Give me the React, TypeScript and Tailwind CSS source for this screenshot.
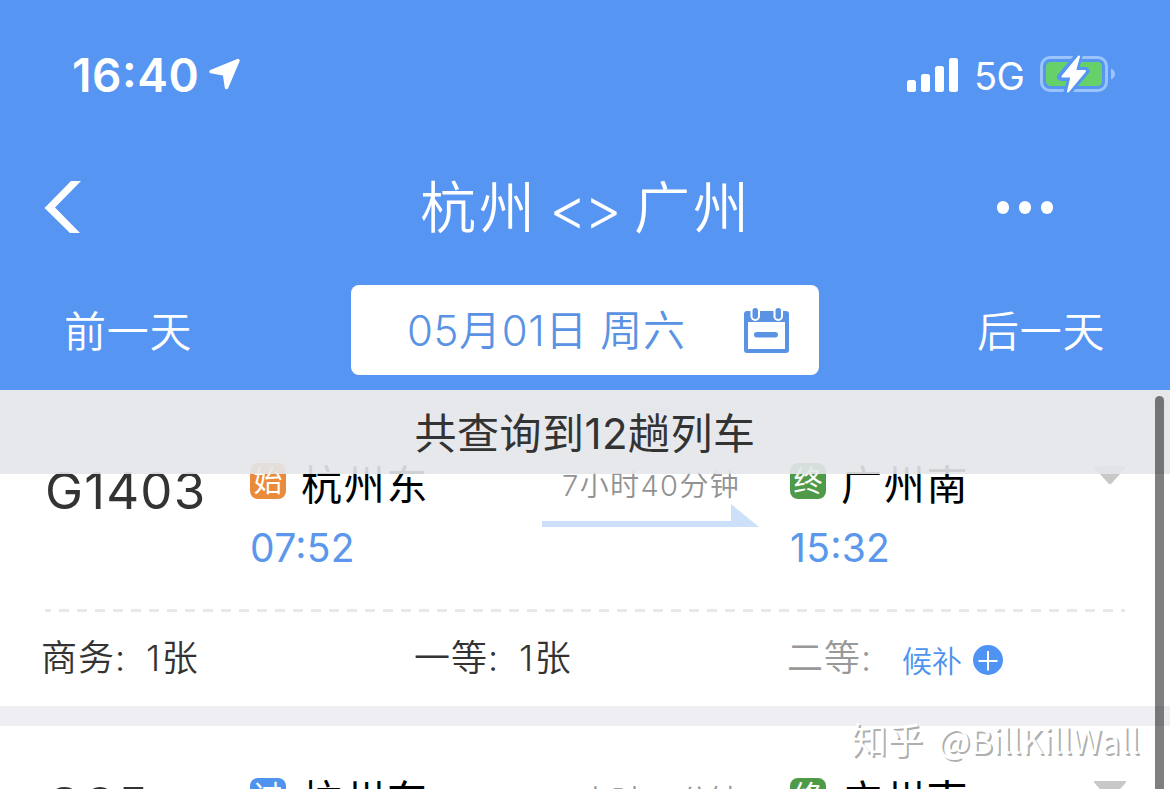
import { clsx } from "clsx";

type Stop = { badge: string; color: string; station: string; time: string };

type Train = {
  code: string;
  from: Stop;
  to: Stop;
  duration: string;
};

const trains: Train[] = [
  {
    code: "G1403",
    from: { badge: "始", color: "bg-[#e98b3a]", station: "杭州东", time: "07:52" },
    to: { badge: "终", color: "bg-[#4f9a48]", station: "广州南", time: "15:32" },
    duration: "7小时40分钟",
  },
  {
    code: "G85",
    from: { badge: "过", color: "bg-[#4f93ee]", station: "杭州东", time: "09:05" },
    to: { badge: "终", color: "bg-[#4f9a48]", station: "广州南", time: "15:50" },
    duration: "6小时45分钟",
  },
];

function StatusBar() {
  return (
    <div className="flex h-[149px] items-center pl-[72px] pr-[54px]">
      <span className="w-[136px] text-[46px] leading-[52px] font-[560] tracking-[0.6px] [font-feature-settings:'case']">
        16:40
      </span>
      <svg width="33" height="33" viewBox="0 0 33 33" fill="white" stroke="white" strokeWidth="3.5" strokeLinejoin="round">
        <path d="M30 2.5 L3 13.5 L16.5 16 L18.5 29.5 Z" />
      </svg>
      <div className="ml-auto flex items-center">
        <svg width="52" height="34" viewBox="0 0 52 34" fill="white">
          <rect x="0" y="22" width="9" height="12" rx="2.5" />
          <rect x="14" y="16" width="9" height="18" rx="2.5" />
          <rect x="28" y="8" width="9" height="26" rx="2.5" />
          <rect x="42" y="0" width="9" height="34" rx="2.5" />
        </svg>
        <span className="ml-[15px] w-[66px] pt-[2px] text-[38px] leading-[44px] tracking-[-0.5px]">5G</span>
        <svg className="-mt-[2px]" width="76" height="40" viewBox="0 0 76 40">
          <rect x="1.5" y="3.5" width="65" height="33" rx="8.5" fill="none" stroke="#9ac4fb" strokeWidth="3" />
          <path d="M71 14.5 Q75 16.5 75 20 Q75 23.5 71 25.5 Z" fill="#9ac4fb" />
          <rect x="6" y="8" width="56" height="24" rx="4.5" fill="#65d168" />
          <path
            d="M38.5 2 L21 23 H32 L27.5 38 L45.5 17 H34.5 Z"
            fill="white"
            stroke="#5695f2"
            strokeWidth="8"
            strokeLinejoin="round"
          />
          <path
            d="M39 2.5 L22.5 22.5 H31.5 L28 37.5 L45 17 H35 Z"
            fill="white"
            stroke="white"
            strokeWidth="2"
            strokeLinejoin="round"
          />
        </svg>
      </div>
    </div>
  );
}

function NavBar() {
  return (
    <div className="flex h-[116px] items-center pl-[44px]">
      <svg width="38" height="52" viewBox="0 0 38 52" fill="white">
        <path d="M27 0 H37 L11 26.5 L36 52 H26 L0.5 27 Z" />
      </svg>
      <h1 className="ml-[338px] flex w-[341px] items-center pt-[2px] text-[56px] leading-[64px] font-[350]">
        <span className="w-[129px] tracking-[3px]">杭州</span>
        <span className="w-[85px] pt-[2px] text-[58px] tracking-[-3px]">{"<>"}</span>
        <span className="tracking-[3px]">广州</span>
      </h1>
      <div className="ml-[236px] flex gap-[10px]">
        <span className="h-[13px] w-3 rounded-full bg-white" />
        <span className="h-[13px] w-3 rounded-full bg-white" />
        <span className="h-[13px] w-3 rounded-full bg-white" />
      </div>
    </div>
  );
}

function CalendarIcon() {
  return (
    <svg className="mt-[2px]" width="48" height="48" viewBox="0 0 48 48">
      <rect x="1" y="4" width="45" height="42" rx="3" fill="#5b93e4" />
      <rect x="5" y="15" width="37" height="27" fill="white" />
      <rect x="11" y="25" width="24" height="5.5" rx="2.7" fill="#5b93e4" />
      <rect x="7.5" y="-1" width="9.5" height="15" rx="4.7" fill="white" />
      <rect x="30.5" y="-1" width="9.5" height="15" rx="4.7" fill="white" />
      <rect x="9.5" y="1" width="5.5" height="11" rx="2.7" fill="#5b93e4" />
      <rect x="32.5" y="1" width="5.5" height="11" rx="2.7" fill="#5b93e4" />
    </svg>
  );
}

function DateBar() {
  return (
    <div className="flex h-[125px] items-start pt-5 pl-[64px] text-[42px] font-[350]">
      <button className="h-[90px] w-[287px] pt-[2px] text-left tracking-[0.8px] whitespace-nowrap">前一天</button>
      <button className="flex h-[90px] w-[468px] items-center rounded-lg bg-white pl-[56px] text-[#5b93e4]">
        <span className="w-[336px] text-left tracking-[0.6px] whitespace-nowrap">05月01日 周六</span>
        <CalendarIcon />
      </button>
      <button className="ml-[158px] h-[90px] pt-[2px] text-left tracking-[0.8px] whitespace-nowrap">后一天</button>
    </div>
  );
}

function StopInfo({ stop }: { stop: Stop }) {
  return (
    <div>
      <div className="flex h-[46px] items-center">
        <span
          className={clsx(
            "flex h-9 w-9 items-center justify-center rounded-lg text-[29px] leading-none text-white",
            stop.color
          )}
        >
          {stop.badge}
        </span>
        <span className="ml-[15px] pt-[7px] text-[41px] leading-[46px] tracking-[1.7px] text-black">
          {stop.station}
        </span>
      </div>
      <div className="mt-[21px] text-[39px] leading-[46px] tracking-[0.3px] text-[#5b97ec] [font-feature-settings:'case']">
        {stop.time}
      </div>
    </div>
  );
}

function TrainCard({ train }: { train: Train }) {
  return (
    <li className="h-[295px] bg-white">
      <div className="grid h-[198px] grid-cols-[205px_292px_248px_303px_1fr] pt-[47px] pl-[45px]">
        <div className="pt-[3px] text-[51px] leading-[60px] tracking-[1.2px] text-[#333]">{train.code}</div>
        <StopInfo stop={train.from} />
        <div className="pt-[8px]">
          <div className="h-[38px] pt-px pl-[20px] text-[29px] leading-[38px] font-[350] tracking-[1.4px] text-[#929292]">
            {train.duration}
          </div>
          <svg width="218" height="23" viewBox="0 0 218 23" fill="#cde0f9">
            <path d="M0 17 H189 V0 L217 23 H0 Z" />
          </svg>
        </div>
        <StopInfo stop={train.to} />
        <svg className="mt-[8px]" width="34" height="19" viewBox="0 0 34 19" fill="#c8c8c8">
          <path d="M2 0 H32 Q34 0 32.5 2 L18.5 17.5 Q17 19 15.5 17.5 L1.5 2 Q0 0 2 0 Z" />
        </svg>
      </div>
      <div className="mr-[45px] ml-[45px] h-[3px] bg-[repeating-linear-gradient(90deg,#e8e8e8_0_6px,transparent_6px_14px,#e8e8e8_14px_18px)]" />
      <div className="flex pt-[24px] pl-[41px] text-[36px] leading-[44px] font-[350] text-[#333]">
        <Seat name="商务" count="1张" />
        <Seat name="一等" count="1张" />
        <div className="flex">
          <span className="w-[115px] tracking-[1px] text-[#999]">二等:</span>
          <span className="flex h-[44px] items-center pt-[5px] text-[30px] text-[#4f93ee]">
            候补
            <svg className="-mt-px ml-[11px]" width="30" height="30" viewBox="0 0 30 30">
              <circle cx="15" cy="15" r="15" fill="#4f93f5" />
              <path d="M5.5 16 H24.5 M15 6 V25.5" stroke="white" strokeWidth="2" />
            </svg>
          </span>
        </div>
      </div>
    </li>
  );
}

function Seat({ name, count }: { name: string; count: string }) {
  return (
    <div className="flex w-[373px]">
      <span className="w-[105px] tracking-[1px]">{name}:</span>
      <span className="tracking-[1.5px] whitespace-nowrap">{count}</span>
    </div>
  );
}

export default function App() {
  return (
    <div className="relative flex h-[789px] w-[1170px] flex-col overflow-hidden bg-[#eeeef3] font-[Inter,'Noto_Sans_CJK_SC',sans-serif]">
      <header className="h-[390px] shrink-0 bg-[#5695f2] text-white">
        <StatusBar />
        <NavBar />
        <DateBar />
      </header>

      <main className="relative h-[399px] overflow-hidden">
        <ul className="flex flex-col gap-5 pt-[21px]">
          {trains.map((train) => (
            <TrainCard key={train.code} train={train} />
          ))}
        </ul>
        {/* Result count floats over the scrolled list */}
        <div className="absolute inset-x-0 top-0 flex h-[84px] items-center justify-center bg-[rgba(228,230,234,0.91)] pt-[2px] text-[42px] font-[370] tracking-[0.5px] text-[#333]">
          共查询到12趟列车
        </div>
        <div className="absolute top-[6px] right-[6px] h-[420px] w-[9px] rounded-full bg-black/50" />
      </main>

      <div className="absolute top-[714px] left-[851px] flex items-baseline gap-[15px] font-['Noto_Sans_CJK_SC',sans-serif] text-[36px] leading-[48px] whitespace-nowrap text-white [text-shadow:2px_2px_0_rgba(0,0,0,0.32)]">
        <span>知乎</span>
        <span className="text-[34px]">@BillKillWall</span>
      </div>
    </div>
  );
}
